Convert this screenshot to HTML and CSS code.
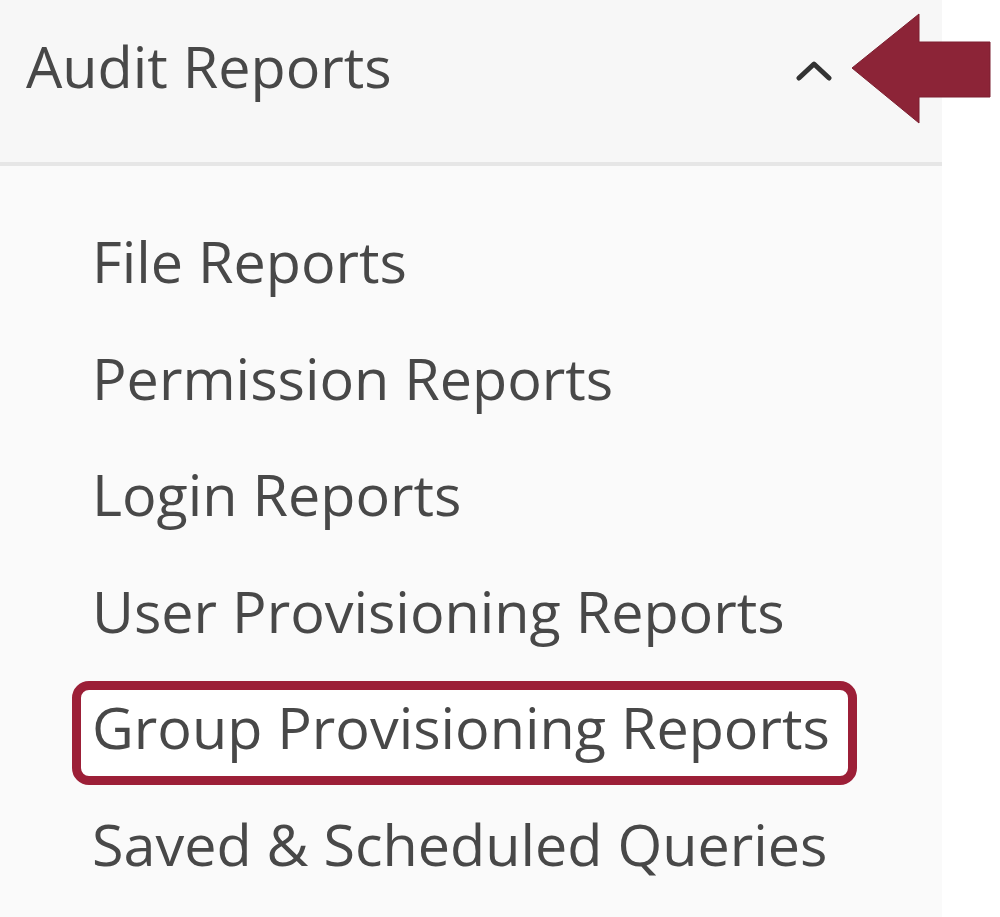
FILE: index.html
```html
<!DOCTYPE html>
<html>
<head>
<meta charset="utf-8">
<link rel="stylesheet" href="styles.css">
</head>
<body>
<nav class="panel">
  <div class="header">
    <span class="header-title">Audit Reports</span>
    <svg class="chevron" width="36" height="22" viewBox="0 0 36 22"><path d="M3 19 L18 5 L33 19" fill="none" stroke="#333" stroke-width="5" stroke-linecap="round" stroke-linejoin="round"/></svg>
  </div>
  <ul class="menu">
    <li class="item"><span class="label">File Reports</span></li>
    <li class="item"><span class="label">Permission Reports</span></li>
    <li class="item"><span class="label">Login Reports</span></li>
    <li class="item"><span class="label">User Provisioning Reports</span></li>
    <li class="item"><span class="label label-highlight">Group Provisioning Reports</span></li>
    <li class="item"><span class="label">Saved &amp; Scheduled Queries</span></li>
  </ul>
</nav>
<svg class="arrow" width="1000" height="140" viewBox="0 0 1000 140"><polygon points="852,68 919,14 919,42 990,42 990,97 919,97 919,123" fill="#8c2437" stroke="#7d1f30" stroke-width="1"/></svg>
</body>
</html>
```
FILE: styles.css
```css
html, body {
  margin: 0;
  padding: 0;
  background: #ffffff;
}
body {
  position: relative;
  width: 1000px;
  height: 917px;
  overflow: hidden;
  font-family: "Open Sans", "Noto Sans", sans-serif;
  color: #484848;
}
.panel {
  width: 942px;
  height: 917px;
  background: #fafafa;
}
.header {
  height: 162px;
  box-sizing: content-box;
  background: #f7f7f7;
  border-bottom: 4px solid #e6e6e6;
  display: flex;
  align-items: flex-start;
  justify-content: space-between;
  padding: 0 110px 0 26px;
}
.header-title {
  font-size: 57.5px;
  line-height: 76px;
  margin-top: 28px;
}
.chevron {
  margin-top: 59px;
}
.menu {
  list-style: none;
  margin: 0;
  padding: 37px 0 0 92px;
}
.item {
  font-size: 57.5px;
  line-height: 116.6px;
  height: 116.6px;
}
.label {
  display: inline-block;
  position: relative;
  isolation: isolate;
}
.label-highlight::before {
  content: "";
  position: absolute;
  top: 12px;
  bottom: 1px;
  left: -20px;
  right: -27px;
  border: 9px solid #9c1f37;
  border-radius: 17px;
  background: #ffffff;
  z-index: -1;
}
.arrow {
  position: absolute;
  left: 0;
  top: 0;
}
```
